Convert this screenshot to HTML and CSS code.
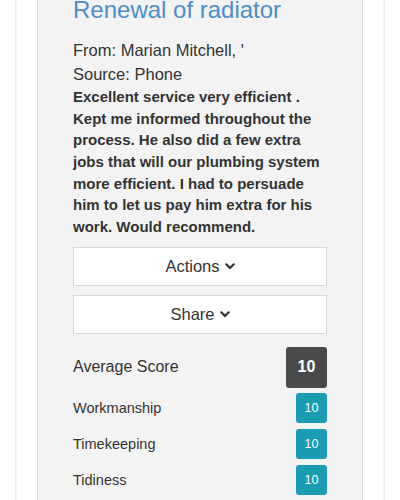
FILE: index.html
```html
<!DOCTYPE html>
<html lang="en">
<head>
<meta charset="utf-8">
<link rel="stylesheet" href="styles.css">
</head>
<body>
<div class="page">
  <div class="review">
    <h2 class="title">Renewal of radiator</h2>
    <p class="meta from">From: Marian Mitchell, '</p>
    <p class="meta">Source: Phone</p>
    <p class="comment">Excellent service very efficient . Kept me informed throughout the process. He also did a few extra jobs that will our plumbing system more efficient. I had to persuade him to let us pay him extra for his work. Would recommend.</p>
    <button class="btn btn-actions">Actions <svg class="chev" viewBox="0 0 10 7" width="10" height="7"><path d="M1.3 1.3 L5 5 L8.7 1.3" fill="none" stroke="#333" stroke-width="2.2" stroke-linecap="round" stroke-linejoin="round"/></svg></button>
    <button class="btn">Share <svg class="chev" viewBox="0 0 10 7" width="10" height="7"><path d="M1.3 1.3 L5 5 L8.7 1.3" fill="none" stroke="#333" stroke-width="2.2" stroke-linecap="round" stroke-linejoin="round"/></svg></button>
    <div class="score-row avg">
      <span class="label">Average Score</span>
      <span class="badge badge-dark">10</span>
    </div>
    <div class="score-row">
      <span class="label small">Workmanship</span>
      <span class="badge badge-info">10</span>
    </div>
    <div class="score-row">
      <span class="label small">Timekeeping</span>
      <span class="badge badge-info">10</span>
    </div>
    <div class="score-row">
      <span class="label small">Tidiness</span>
      <span class="badge badge-info">10</span>
    </div>
  </div>
</div>
</body>
</html>
```
FILE: styles.css
```css
html, body {
  margin: 0;
  padding: 0;
  background: #ffffff;
  overflow: hidden;
}
body {
  font-family: "Liberation Sans", Arial, sans-serif;
  color: #333333;
}
.page {
  margin: 0 15px;
  padding: 0 21px;
  border-left: 1px solid #ebebeb;
  border-right: 1px solid #ebebeb;
  box-shadow: inset 1px 0 0 #f5f5f5, inset -1px 0 0 #f5f5f5;
  height: 500px;
}
.review {
  background: #f3f3f3;
  border: 1px solid #dcdcdc;
  border-top: none;
  border-bottom: none;
  padding: 0 35px;
  height: 500px;
}
.title {
  margin: 0;
  font-size: 24px;
  line-height: 20px;
  font-weight: 400;
  color: #4b8ec8;
}
.meta {
  margin: 0;
  font-size: 16.5px;
  line-height: 24px;
  color: #333;
}
.meta.from {
  margin-top: 18px;
}
.comment {
  margin: 0;
  font-size: 15px;
  line-height: 21.65px;
  font-weight: 700;
  color: #333;
}
.btn {
  display: flex;
  align-items: center;
  justify-content: center;
  gap: 5px;
  width: 100%;
  height: 39px;
  margin: 0 0 9px;
  padding: 0;
  background: #ffffff;
  border: 1px solid #d8d8d8;
  border-radius: 0;
  font-family: "Liberation Sans", Arial, sans-serif;
  font-size: 16.5px;
  color: #333;
}
.btn-actions {
  margin-top: 9px;
}
.chev {
  display: block;
  margin-top: 1px;
}
.score-row {
  display: flex;
  align-items: center;
  justify-content: space-between;
  margin-top: 6px;
}
.score-row.avg {
  margin-top: 13px;
  margin-bottom: -1px;
}
.label {
  font-size: 16px;
  color: #333;
}
.label.small {
  font-size: 14.5px;
}
.badge {
  display: flex;
  align-items: center;
  justify-content: center;
  border-radius: 3px;
  color: #ffffff;
}
.badge-dark {
  width: 41px;
  height: 41px;
  background: #4a4a4a;
  font-size: 16px;
  font-weight: 700;
}
.badge-info {
  width: 31px;
  height: 30px;
  background: #1a9db3;
  font-size: 12.5px;
}
```
